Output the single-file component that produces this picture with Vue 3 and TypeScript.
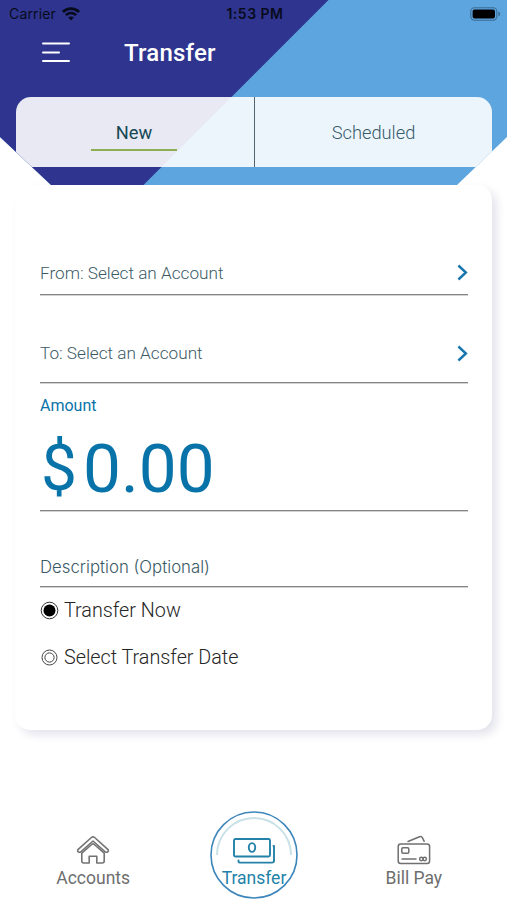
<script setup lang="ts">
import { ref } from 'vue'

type Tab = 'New' | 'Scheduled'
const tabs: Tab[] = ['New', 'Scheduled']
const activeTab = ref<Tab>('New')

const accounts = [
  { id: 'from', label: 'From: Select an Account' },
  { id: 'to', label: 'To: Select an Account' },
]

const options = [
  { id: 'now', label: 'Transfer Now' },
  { id: 'date', label: 'Select Transfer Date' },
]
const schedule = ref('now')
</script>

<template>
  <div class="screen">
    <header class="header">
      <svg class="header-bg" viewBox="0 0 507 185" aria-hidden="true">
        <rect width="507" height="185" fill="#5da5df" />
        <path d="M0 0H328.5L143.5 185H0Z" fill="#2f358f" />
      </svg>

      <div class="status">
        <div class="carrier">
          <span>Carrier</span>
          <svg width="18" height="14" viewBox="0 0 18 14" aria-hidden="true">
            <g fill="none" stroke="#080b1c" stroke-width="2.7">
              <path d="M.9 5C5.4.5 12.6.5 17.1 5" />
              <path d="M3.9 8.1c2.9-2.8 7.3-2.8 10.2 0" />
            </g>
            <path d="M9 13.4 6.1 10.5c1.6-1.5 4.2-1.5 5.8 0Z" fill="#080b1c" />
          </svg>
        </div>
        <span class="time">1:53 PM</span>
        <svg class="battery" width="31" height="14" viewBox="0 0 31 14" aria-hidden="true">
          <rect x=".8" y=".8" width="26" height="12.4" rx="3.6" fill="none" stroke="#3c6c95" stroke-width="1.1" />
          <rect x="2.6" y="2.6" width="22.4" height="8.8" rx="1.8" fill="#000" />
          <path d="M28.4 4.6c2.4.8 2.4 4 0 4.8Z" fill="#3c6c95" />
        </svg>
      </div>

      <div class="title-row">
        <svg class="menu" width="28" height="21" viewBox="0 0 28 21" aria-label="Menu">
          <path d="M1 1.6H27M1 10.4H17M1 18.9H27" stroke="#fff" stroke-width="2" stroke-linecap="round" />
        </svg>
        <h1>Transfer</h1>
      </div>

      <nav class="tabs">
        <button
          v-for="tab in tabs"
          :key="tab"
          class="tab"
          :class="{ active: tab === activeTab }"
          @click="activeTab = tab"
        >
          <span>{{ tab }}</span>
        </button>
      </nav>
    </header>

    <main class="card">
      <button v-for="row in accounts" :key="row.id" class="account" :class="row.id">
        <span>{{ row.label }}</span>
        <svg width="11" height="17" viewBox="0 0 11 17" aria-hidden="true">
          <path d="M1.4 1.5 8.9 8.5 1.4 15.5" fill="none" stroke="#1676ad" stroke-width="2.4" />
        </svg>
      </button>

      <section class="amount">
        <div class="amount-label">Amount</div>
        <div class="amount-value"><span class="currency">$</span><span>0.00</span></div>
      </section>

      <div class="description"><span>Description (Optional)</span></div>

      <div class="options">
        <label v-for="option in options" :key="option.id" class="option" @click="schedule = option.id">
          <svg width="19" height="19" viewBox="0 0 19 19" aria-hidden="true">
            <template v-if="schedule === option.id">
              <circle cx="9.5" cy="9.5" r="8.3" fill="none" stroke="#333" stroke-width="1" />
              <circle cx="9.5" cy="9.5" r="6" fill="#000" />
            </template>
            <g v-else fill="none" stroke="#444" stroke-width="1">
              <circle cx="9.5" cy="9.5" r="7.5" />
              <circle cx="9.5" cy="9.5" r="4.6" />
            </g>
          </svg>
          <span>{{ option.label }}</span>
        </label>
      </div>
    </main>

    <nav class="bottom-nav">
      <a class="nav-item accounts">
        <svg width="34" height="30" viewBox="0 0 34 30" aria-hidden="true">
          <g fill="none" stroke="#737373" stroke-width="1.6" stroke-linejoin="round" stroke-linecap="round">
            <path d="M2.2 14.3 15.4 2.5Q17 1.2 18.6 2.5L31.8 14.3Q33 15.7 31.7 16.8 30.5 17.8 29.2 16.8L17 6 4.8 16.8Q3.5 17.8 2.3 16.8 1 15.7 2.2 14.3Z" />
            <path d="M5.8 18.2V26Q5.8 28 7.8 28H13.2V21.3H20.8V28H26.2Q28.2 28 28.2 26V18.2L18.3 9.5Q17 8.4 15.7 9.5Z" />
          </g>
        </svg>
        <span>Accounts</span>
      </a>

      <a class="nav-item transfer">
        <svg class="ring" width="90" height="90" viewBox="0 0 90 90" aria-hidden="true">
          <circle cx="45" cy="45" r="43" fill="none" stroke="#3d86bb" stroke-width="1.6" />
          <path d="M8 45A37 37 0 0 1 82 45" fill="none" stroke="#c9e1e7" stroke-width="2" />
        </svg>
        <svg width="42" height="26" viewBox="0 0 42 26" aria-hidden="true">
          <g fill="none" stroke="#2482a9" stroke-width="1.9" stroke-linecap="round" stroke-linejoin="round">
            <rect x="1" y="1" width="36" height="17.5" rx="1.5" />
            <path d="M5.5 22.5V23.5Q5.5 24.6 6.7 24.6H39Q41 24.6 41 22.8V8H40.5" />
            <ellipse cx="19" cy="9.5" rx="3.2" ry="4.4" />
          </g>
        </svg>
        <span>Transfer</span>
      </a>

      <a class="nav-item bill-pay">
        <svg width="34" height="30" viewBox="0 0 34 30" aria-hidden="true">
          <g fill="none" stroke="#707070" stroke-width="1.5" stroke-linecap="round" stroke-linejoin="round">
            <rect x="1.2" y="9" width="31.4" height="19.5" rx="2.5" />
            <path d="M11 6.5 22.5 1.7Q24.5 1 25.5 2.8L27.2 6.3" />
            <rect x="4.8" y="12.8" width="7" height="5.4" rx="1.2" />
            <path d="M5 24H19" />
            <circle cx="24.3" cy="24" r="1.7" />
            <circle cx="27.7" cy="24" r="1.7" />
          </g>
        </svg>
        <span>Bill Pay</span>
      </a>
    </nav>
  </div>
</template>

<style>
body {
  margin: 0;
  background: #fff;
}
</style>

<style scoped>
.screen {
  display: flex;
  flex-direction: column;
  width: 507px;
  height: 900px;
  overflow: hidden;
  background: #fff;
  font-family: Roboto, sans-serif;
}
button {
  border: 0;
  padding: 0;
  background: none;
  font: inherit;
}
svg {
  display: block;
  flex: none;
}
.header {
  position: relative;
  z-index: 1;
  flex: none;
  box-sizing: border-box;
  height: 185px;
  clip-path: polygon(0 0, 100% 0, 100% 137px, 457px 100%, 51px 100%, 0 137px);
}
.header-bg {
  position: absolute;
  inset: 0;
  width: 507px;
  height: 185px;
  z-index: -1;
}
.status {
  display: grid;
  grid-template-columns: 1fr auto 1fr;
  align-items: center;
  height: 27px;
  padding: 0 6px 0 9px;
  color: #080b1c;
  font-family: Inter, sans-serif;
  font-size: 14px;
}
.carrier {
  display: flex;
  align-items: center;
  gap: 6px;
  letter-spacing: 0.15px;
}
.time {
  font-weight: 600;
  letter-spacing: 0.5px;
}
.battery {
  justify-self: end;
}
.title-row {
  display: flex;
  align-items: center;
  gap: 54px;
  height: 50px;
  margin-bottom: 20px;
  padding-left: 42px;
}
h1 {
  margin: 2px 0 0;
  color: #fff;
  font-size: 24px;
  font-weight: 500;
  letter-spacing: 0.2px;
}
.tabs {
  display: grid;
  grid-template-columns: 238.5px 1fr;
  height: 69.5px;
  margin: 0 15px 0 15.5px;
  border-radius: 15px 15px 0 0;
  background: rgba(255, 255, 255, 0.89);
}
.tab {
  display: flex;
  align-items: center;
  justify-content: center;
  padding-top: 1px;
  color: #365b6b;
  font-size: 18.3px;
  font-weight: 300;
}
.tab + .tab {
  border-left: 1px solid #53656e;
}
.tab span {
  box-sizing: border-box;
  width: 86px;
  height: 38px;
  line-height: 40px;
  text-align: center;
}
.tab.active {
  padding-right: 1.5px;
}
.tab.active span {
  border-bottom: 2px solid #8dae52;
  color: #164753;
  font-weight: 400;
}
.card {
  display: flex;
  flex: none;
  flex-direction: column;
  box-sizing: border-box;
  width: 477px;
  height: 545px;
  margin-left: 15px;
  padding: 65px 24px 0 25px;
  border-radius: 15px;
  background: #fff;
  box-shadow: 5px 5px 9px rgba(45, 45, 115, 0.13);
}
.account,
.amount,
.description {
  flex: none;
  box-sizing: border-box;
  border-bottom: 1px solid #858585;
  box-shadow: 0 1px 0 #d2d2d2;
}
.account {
  display: flex;
  align-items: center;
  justify-content: space-between;
  height: 45px;
  color: #3a5a66;
  font-size: 17.2px;
  font-weight: 300;
}
.account.from span {
  padding-top: 2px;
}
.account.to {
  height: 58px;
  margin-top: 30px;
  padding-bottom: 1px;
}
.amount {
  height: 128px;
  padding-top: 13px;
  color: #0873a9;
}
.amount-label {
  height: 20px;
  line-height: 20px;
  font-size: 16px;
}
.amount-value {
  display: flex;
  gap: 4px;
  padding-left: 1px;
  font-size: 67.5px;
  line-height: 106px;
}
.currency {
  width: 38px;
  font-size: 64px;
}
.description {
  display: flex;
  align-items: flex-end;
  height: 76px;
  padding-bottom: 9px;
  color: #3a5a66;
  font-family: Inter, sans-serif;
  font-size: 16.8px;
  font-weight: 300;
  line-height: 20px;
}
.options {
  display: flex;
  flex-direction: column;
}
.option {
  display: flex;
  align-items: center;
  gap: 5px;
  height: 47px;
  color: #262626;
  font-size: 19.75px;
  font-weight: 300;
}
.bottom-nav {
  display: grid;
  grid-template-columns: repeat(3, 1fr);
  margin-top: auto;
  padding: 0 13px;
  height: 90px;
  color: #6e6e6e;
  font-size: 17.5px;
}
.nav-item {
  position: relative;
  display: flex;
  flex-direction: column;
  align-items: center;
  padding-top: 25px;
}
.nav-item > span {
  margin-top: 2px;
  line-height: 22px;
}
.transfer {
  left: 0.5px;
  color: #2482a9;
}
.transfer > span {
  margin-top: 3px;
}
.transfer > svg:not(.ring) {
  margin-top: 3px;
}
.ring {
  position: absolute;
  top: 0;
  left: 50%;
  transform: translateX(-50%);
}
</style>
